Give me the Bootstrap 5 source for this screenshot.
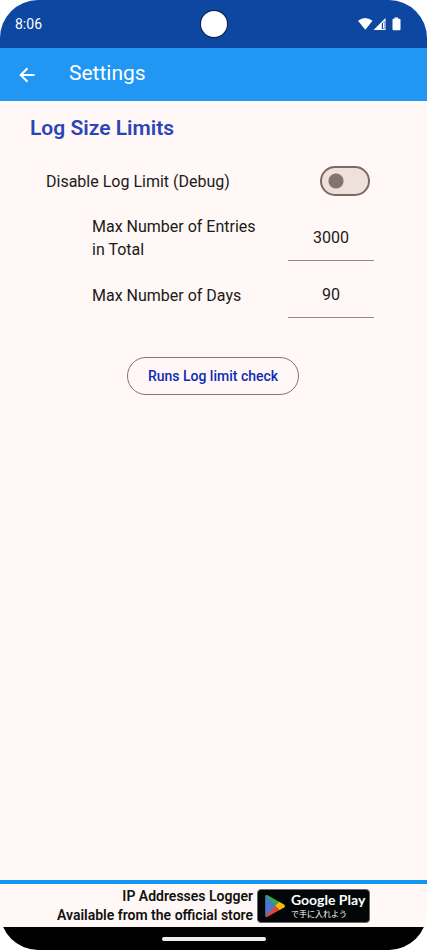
<!DOCTYPE html>
<html lang="en">
<head>
<meta charset="utf-8">
<meta name="viewport" content="width=device-width, initial-scale=1">
<title>Settings</title>
<link href="https://cdn.jsdelivr.net/npm/bootstrap@5.3.0/dist/css/bootstrap.min.css" rel="stylesheet">
<style>
body { font-family: Roboto, "Noto Sans CJK JP", sans-serif; background: #fff; color: #201a19; }
.device { background: #fff8f6; border-radius: 38px; }
.status-bar { background: #0d47a1; height: 48px; padding: 0 26px 0 15px; font-size: 14px; }
.camera { width: 26px; height: 26px; background: #fff; box-shadow: 0 0 0 1px #0a1f48; }
.app-bar { background: #2196f3; height: 53px; padding: 0 16px; gap: 31px; }
.app-bar h1 { font-size: 21px; line-height: 24px; padding-bottom: 4px; }
.settings { padding: 13px 53px 0 30px; }
.settings h2 { font-size: 21px; line-height: 28px; color: #2a45b8; font-weight: 600; }
.settings label { font-size: 16px; line-height: 23px; }
.toggle-row { padding: 24px 4px 0 16px; }
.toggle-row .form-check-input { width: 50px; height: 30px; border: 2px solid #7d6963; background-color: #eee0dd; background-image: radial-gradient(circle, #85736e 7px, transparent 8px); background-size: 28px 26px; background-position: left center; }
.toggle-row .form-check-input:checked { background-position: right center; }
.limit-row { padding-left: 62px; gap: 16px; min-height: 46px; }
.limit-row input { width: 86px; height: 46px; border: 0; border-bottom: 1px solid #958c8a; background: transparent; font-size: 16px; color: #201a19; }
.limit-list { gap: 11px; padding-top: 19px; }
.run-row { padding: 39px 0 0 22px; }
.run-btn { width: 172px; height: 38px; border: 1px solid #85736e; color: #0f2bb5; font-size: 14px; font-weight: 500; }
.promo { border-top: 4px solid #1496f6; height: 47px; padding-right: 57px; gap: 4px; }
.promo-text { font-size: 14px; line-height: 19px; font-weight: 600; color: #111; }
.store-badge { width: 113px; height: 34px; background: #020606; border: 1px solid #666; border-radius: 4px; padding-left: 6px; gap: 5px; }
.store-name { font-family: Lato, sans-serif; font-size: 14px; line-height: 17px; font-weight: 700; }
.store-note { font-family: "Noto Sans CJK JP", sans-serif; font-size: 8px; line-height: 12px; }
.nav-bar { background: #000; height: 23px; }
.handle { width: 104px; height: 4px; background: #eee; }
</style>
<script defer src="https://cdn.jsdelivr.net/npm/bootstrap@5.3.0/dist/js/bootstrap.bundle.min.js"></script>
</head>
<body>
<div class="device d-flex flex-column min-vh-100 overflow-hidden">
  <div class="status-bar position-relative d-flex align-items-center justify-content-between text-white">
    <span>8:06</span>
    <span class="camera rounded-circle position-absolute top-50 start-50 translate-middle"></span>
    <svg width="43" height="14" viewBox="0 0 43 14" fill="#fff" aria-hidden="true">
      <path d="M0 3.700Q7.200-1.800 14.500 3.700L7.300 12.700Z"/>
      <path fill-rule="evenodd" d="M15.500 13L27.500 1V13ZM23.800 6.500V12H26.500V4Z"/>
      <path d="M25 5.500h1.200v6H25z"/>
      <path d="M36.500 0.500h3.500v1.300h1.500q1 0 1 1v9.400q0 1-1 1h-6q-1 0-1-1V2.800q0-1 1-1h1z"/>
    </svg>
  </div>
  <header class="app-bar d-flex align-items-center text-white">
    <button type="button" class="btn p-0 border-0 text-white d-flex" aria-label="Back">
      <svg width="22" height="22" viewBox="0 0 22 22" fill="none" stroke="#fff" stroke-width="2" aria-hidden="true"><path d="M18.500 11H5M11.500 4.200L4.700 11l6.800 6.800"/></svg>
    </button>
    <h1 class="m-0 fw-normal">Settings</h1>
  </header>
  <main class="settings flex-grow-1">
    <h2 class="m-0">Log Size Limits</h2>
    <form>
      <div class="toggle-row form-switch d-flex align-items-center justify-content-between">
        <label for="disable">Disable Log Limit (Debug)</label>
        <input class="form-check-input m-0" type="checkbox" role="switch" id="disable">
      </div>
      <div class="limit-list d-flex flex-column">
        <div class="limit-row d-flex align-items-center justify-content-between">
          <label for="entries">Max Number of Entries<br>in Total</label>
          <input type="text" inputmode="numeric" class="text-center p-0 flex-shrink-0" id="entries" value="3000">
        </div>
        <div class="limit-row d-flex align-items-center justify-content-between">
          <label for="days">Max Number of Days</label>
          <input type="text" inputmode="numeric" class="text-center p-0 flex-shrink-0" id="days" value="90">
        </div>
      </div>
      <div class="run-row d-flex justify-content-center">
        <button type="button" class="btn run-btn rounded-pill p-0">Runs Log limit check</button>
      </div>
    </form>
  </main>
  <footer>
    <div class="promo d-flex align-items-center justify-content-end">
      <div class="promo-text text-end">IP Addresses Logger<br>Available from the official store</div>
      <a href="#" class="store-badge d-flex align-items-center text-white text-decoration-none">
        <svg width="22" height="24" viewBox="0 0 22 24" aria-hidden="true">
          <path fill="#4b78c9" d="M1.200 2.200Q1.500 1 2.500 1L12 12 2.500 23Q1.200 23 1.200 21.600Z"/>
          <path fill="#35a853" d="M1.500 1.500Q2.300 .5 3.700 1.300L15.500 8 11.500 12Z"/>
          <path fill="#fbbc04" d="M15.300 7.800L20.300 10.700Q22 12 20.300 13.300L15.300 16.200 11 12Z"/>
          <path fill="#ea4335" d="M11.500 12L15.500 16 3.700 22.700Q2.300 23.500 1.500 22.500Z"/>
        </svg>
        <span class="d-flex flex-column text-nowrap">
          <span class="store-name">Google Play</span>
          <span class="store-note" lang="ja">で手に入れよう</span>
        </span>
      </a>
    </div>
    <div class="nav-bar d-flex align-items-center justify-content-center">
      <span class="handle rounded-pill"></span>
    </div>
  </footer>
</div>
</body>
</html>
